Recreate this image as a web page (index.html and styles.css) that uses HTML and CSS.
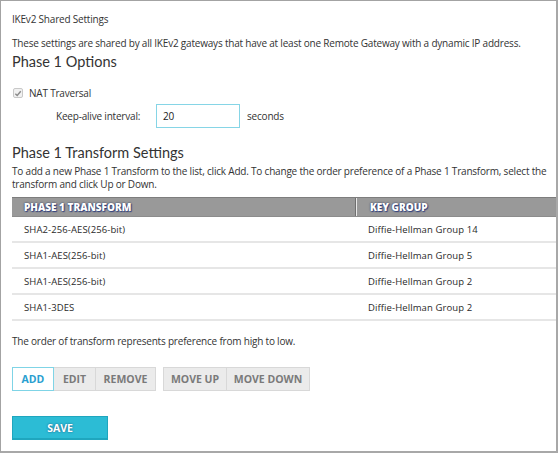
FILE: index.html
```html
<!DOCTYPE html>
<html>
<head>
<meta charset="utf-8">
<link rel="stylesheet" href="styles.css">
</head>
<body>
<div class="frame">
  <div class="title">IKEv2 Shared Settings</div>
  <p class="desc">These settings are shared by all IKEv2 gateways that have at least one Remote Gateway with a dynamic IP address.</p>
  <h2 class="heading">Phase 1 Options</h2>
  <label class="check-row">
    <span class="checkbox"><svg width="9" height="9" viewBox="0 0 9 9"><path d="M1.5 4.8 L3.6 6.8 L7.6 2" fill="none" stroke="#8a8a8a" stroke-width="1.6"/></svg></span>
    <span>NAT Traversal</span>
  </label>
  <div class="keepalive">
    <span class="ka-label">Keep-alive interval:</span>
    <span class="input">20</span>
    <span class="unit">seconds</span>
  </div>
  <h2 class="heading heading2">Phase 1 Transform Settings</h2>
  <p class="help">To add a new Phase 1 Transform to the list, click Add. To change the order preference of a Phase 1 Transform, select the transform and click Up or Down.</p>
  <div class="table">
    <div class="thead">
      <div class="th c1">PHASE 1 TRANSFORM</div>
      <div class="th c2">KEY GROUP</div>
    </div>
    <div class="tr"><div class="td c1">SHA2-256-AES(256-bit)</div><div class="td c2">Diffie-Hellman Group 14</div></div>
    <div class="tr"><div class="td c1">SHA1-AES(256-bit)</div><div class="td c2">Diffie-Hellman Group 5</div></div>
    <div class="tr"><div class="td c1">SHA1-AES(256-bit)</div><div class="td c2">Diffie-Hellman Group 2</div></div>
    <div class="tr"><div class="td c1">SHA1-3DES</div><div class="td c2">Diffie-Hellman Group 2</div></div>
  </div>
  <p class="note">The order of transform represents preference from high to low.</p>
  <div class="actions">
    <div class="btn-group">
      <span class="btn active b-add">ADD</span>
      <span class="btn b-edit">EDIT</span>
      <span class="btn b-remove">REMOVE</span>
    </div>
    <div class="btn-group">
      <span class="btn b-up">MOVE UP</span>
      <span class="btn b-down">MOVE DOWN</span>
    </div>
  </div>
  <div class="save-row"><span class="save">SAVE</span></div>
</div>
</body>
</html>
```
FILE: styles.css
```css
html, body {
  margin: 0;
  padding: 0;
  background: #fff;
}
.frame {
  box-sizing: border-box;
  width: 558px;
  height: 453px;
  border-left: 1px solid #a3a3a3;
  border-top: 1px solid #a3a3a3;
  border-right: 2px solid #a8a8a8;
  border-bottom: 2px solid #a8a8a8;
  padding: 0 0 0 11px;
  overflow: hidden;
  font-family: "Open Sans", sans-serif;
  font-size: 10px;
  letter-spacing: -0.2px;
  color: #333;
}
.title {
  margin-top: 11px;
  line-height: 15px;
}
.desc {
  margin: 9px 0 0;
  line-height: 15px;
}
.heading {
  margin: 2px 0 0;
  font-family: Lato, sans-serif;
  font-weight: 400;
  font-size: 14.5px;
  letter-spacing: 0;
  line-height: 18px;
  color: #333;
}
.check-row {
  display: flex;
  align-items: center;
  margin-top: 15px;
  height: 14px;
  line-height: 14px;
}
.checkbox {
  box-sizing: border-box;
  width: 10px;
  height: 10px;
  border: 1px solid #c8c8c8;
  background: #f1f1f1;
  border-radius: 2px;
  margin: 0 6px 0 1px;
  display: flex;
  align-items: center;
  justify-content: center;
}
.checkbox svg { display: block; }
.keepalive {
  display: flex;
  align-items: center;
  margin-top: 4px;
  height: 24px;
}
.ka-label {
  margin-left: 44px;
  width: 100px;
}
.input {
  box-sizing: border-box;
  width: 84px;
  height: 24px;
  border: 1px solid #86d5e6;
  padding-left: 6px;
  line-height: 22px;
  color: #222;
}
.unit {
  margin-left: 7px;
}
.heading2 {
  margin-top: 16px;
}
.help {
  margin: 3px 0 0;
  line-height: 13px;
  padding-right: 4px;
}
.table {
  margin-top: 6px;
  width: 560px;
}
.thead {
  display: flex;
  height: 18px;
  background: #999;
  border-top: 1px solid #7d7d7d;
  border-bottom: 1px solid #8c8c8c;
}
.th {
  font-weight: 800;
  color: #fff;
  font-size: 10px;
  letter-spacing: 0;
  line-height: 18px;
  text-shadow: 0 0 2px #1c2a5a, 1px 1px 1px #3b4a8a;
}
.c1 {
  box-sizing: border-box;
  width: 344px;
  padding-left: 12px;
}
.c2 {
  padding-left: 12px;
}
.thead .c1 {
  border-right: 1px solid #6f6f6f;
  box-shadow: 1px 0 0 #e8e8e8;
  margin-right: 2px;
}
.tr {
  display: flex;
  height: 24px;
  border-bottom: 2px solid #e6e6e6;
  align-items: center;
}
.td {
  font-size: 9.5px;
  letter-spacing: 0.1px;
  color: #2a2a2a;
}
.tr .c2 { padding-left: 12px; }
.note {
  margin: 13px 0 0;
  line-height: 15px;
}
.actions {
  display: flex;
  gap: 7px;
  margin-top: 18px;
}
.btn-group {
  display: flex;
}
.btn {
  box-sizing: border-box;
  height: 24px;
  line-height: 22px;
  border: 1px solid #d8d8d8;
  background: #ebebeb;
  color: #7a7a7a;
  font-weight: 700;
  font-size: 10.5px;
  letter-spacing: 0;
  text-align: center;
}
.btn + .btn { border-left: none; }
.btn.active {
  background: #fff;
  border-color: #7fd4e6;
  color: #2a9fd0;
}
.b-add { width: 42px; }
.b-edit { width: 42px; }
.b-remove { width: 60px; }
.b-up { width: 64px; }
.b-down { width: 83px; }
.save-row {
  display: flex;
  margin-top: 25px;
}
.save {
  box-sizing: border-box;
  width: 96px;
  height: 24px;
  line-height: 22px;
  background: #2cbcd5;
  border: 1px solid #1fa6be;
  border-bottom-width: 2px;
  color: #fff;
  font-weight: 700;
  text-align: center;
  font-size: 10.5px;
  letter-spacing: 0;
  text-shadow: 0 0 2px #1a4f7a;
}
```
